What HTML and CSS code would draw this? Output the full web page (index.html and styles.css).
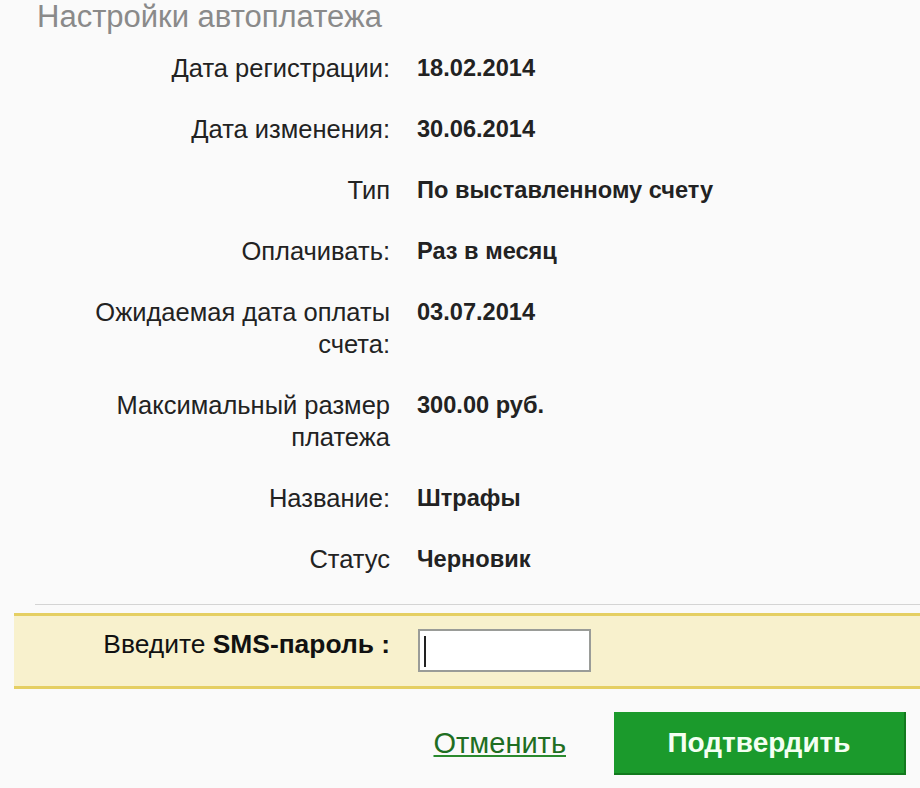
FILE: index.html
```html
<!DOCTYPE html>
<html lang="ru">
<head>
<meta charset="utf-8">
<title>Настройки автоплатежа</title>
<link rel="stylesheet" href="styles.css">
</head>
<body>
<div class="page">
  <h1 class="title">Настройки автоплатежа</h1>
  <div class="details">
    <div class="label">Дата регистрации:</div>
    <div class="value">18.02.2014</div>
    <div class="label">Дата изменения:</div>
    <div class="value">30.06.2014</div>
    <div class="label">Тип</div>
    <div class="value">По выставленному счету</div>
    <div class="label">Оплачивать:</div>
    <div class="value">Раз в месяц</div>
    <div class="label">Ожидаемая дата оплаты счета:</div>
    <div class="value">03.07.2014</div>
    <div class="label">Максимальный размер платежа</div>
    <div class="value">300.00 руб.</div>
    <div class="label">Название:</div>
    <div class="value">Штрафы</div>
    <div class="label">Статус</div>
    <div class="value">Черновик</div>
  </div>
  <div class="separator"></div>
  <div class="sms-band">
    <label class="sms-label" for="sms">Введите <b>SMS-пароль :</b></label>
    <span class="sms-field"><input class="sms-input" id="sms" type="text"></span>
  </div>
  <div class="actions">
    <a class="cancel" href="#">Отменить</a>
    <button class="confirm" type="button">Подтвердить</button>
  </div>
</div>
</body>
</html>
```
FILE: styles.css
```css
html, body {
  margin: 0;
  padding: 0;
  background: #fafafa;
}
body {
  font-family: "Liberation Sans", Arial, sans-serif;
  color: #222;
}
.page {
  width: 920px;
  height: 788px;
  overflow: hidden;
}
.title {
  margin: 0;
  padding-left: 37px;
  font-size: 31px;
  line-height: 34px;
  font-weight: normal;
  color: #8a8a8a;
}
.details {
  display: grid;
  grid-template-columns: 318px auto;
  column-gap: 27px;
  row-gap: 29px;
  margin-top: 18px;
  padding-left: 72px;
  font-size: 25.5px;
  line-height: 32px;
}
.label {
  text-align: right;
  color: #222;
}
.value {
  font-weight: bold;
  font-size: 23.6px;
  color: #222;
}
.separator {
  margin: 29px 0 0 35px;
  height: 1px;
  background: #d4d4d4;
}
.sms-band {
  margin: 8px 0 0 14px;
  display: flex;
  align-items: flex-start;
  gap: 28px;
  height: 76px;
  box-sizing: border-box;
  padding-top: 13px;
  background: #f8f1cd;
  border-top: 3px solid #e5cf63;
  border-bottom: 3px solid #e5cf63;
}
.sms-label {
  width: 376px;
  text-align: right;
  font-family: "Liberation Sans", Arial, sans-serif;
  font-size: 26.4px;
  line-height: 30px;
  color: #111;
}
.sms-field {
  position: relative;
  display: block;
}
.sms-field::after {
  content: "";
  position: absolute;
  left: 6px;
  top: 7px;
  width: 2px;
  height: 31px;
  background: #222;
}
.sms-input {
  display: block;
  width: 173px;
  height: 43px;
  box-sizing: border-box;
  margin: 0;
  border: 2px solid #9a9c98;
  background: #fff;
  outline: none;
}
.actions {
  display: flex;
  justify-content: flex-end;
  align-items: center;
  gap: 48px;
  margin-top: 23px;
  padding-right: 14px;
}
.cancel {
  font-family: "Liberation Sans", Arial, sans-serif;
  font-size: 29px;
  color: #1f6e22;
  text-decoration: underline;
  text-decoration-color: #2a8a2e;
}
.confirm {
  width: 292px;
  height: 63px;
  border: none;
  border-right: 2px solid #127a1e;
  border-bottom: 2px solid #127a1e;
  background: #1b9a2c;
  color: #f4fff2;
  font-family: "Liberation Sans", Arial, sans-serif;
  font-weight: bold;
  font-size: 28px;
  cursor: pointer;
}
```
